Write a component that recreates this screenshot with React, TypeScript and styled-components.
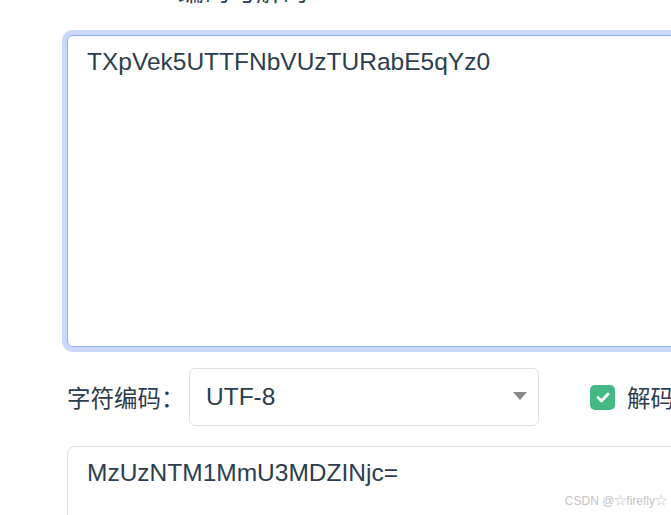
import styled, { createGlobalStyle } from "styled-components";

// 전역 스타일
const GlobalStyle = createGlobalStyle`
  html, body {
    margin: 0;
    padding: 0;
    background: #ffffff;
  }
  body {
    font-family: "Liberation Sans", Arial, "Noto Sans CJK SC", sans-serif;
    color: #2c3e50;
  }
`;

// 화면 전체 래퍼
const Page = styled.div`
  width: 671px;
  height: 515px;
  overflow: hidden;
  position: relative;
  padding-left: 62px;
  box-sizing: border-box;
`;

// 위로 잘려 나간 제목
const Title = styled.div`
  margin-top: -25px;
  padding-left: 116px;
  height: 30px;
  font-size: 26px;
  line-height: 30px;
  font-family: "Noto Sans CJK SC", sans-serif;
`;

// 입력 영역 (포커스 상태)
const InputArea = styled.textarea`
  display: block;
  box-sizing: border-box;
  margin: 30px 0 0 5px;
  width: 720px;
  height: 312px;
  padding: 11px 19px;
  border: 1px solid #8fb0f4;
  border-radius: 6px;
  box-shadow: 0 0 0 5px #cad8fc;
  outline: none;
  resize: none;
  font-family: "Liberation Sans", Arial, sans-serif;
  font-size: 24.5px;
  line-height: 30px;
  color: #2c3e50;
`;

// 옵션 줄
const OptionRow = styled.div`
  display: flex;
  align-items: center;
  margin: 21px 0 0 5px;
  height: 58px;
`;

const Label = styled.span`
  font-family: "Noto Sans CJK SC", sans-serif;
  font-size: 23.5px;
  width: 122px;
  flex: none;
`;

const SelectBox = styled.div`
  position: relative;
  box-sizing: border-box;
  width: 350px;
  height: 58px;
  border: 1px solid #dcdfe6;
  border-radius: 6px;
  display: flex;
  align-items: center;
  padding-left: 16px;
  font-size: 24.5px;
  flex: none;
`;

const Caret = styled.span`
  position: absolute;
  right: 11px;
  top: 23px;
  width: 0;
  height: 0;
  border-left: 7px solid transparent;
  border-right: 7px solid transparent;
  border-top: 8px solid #8a8a8a;
`;

const CheckWrap = styled.label`
  display: flex;
  align-items: center;
  margin-left: 51px;
  gap: 12px;
  flex: none;
`;

const CheckBox = styled.span`
  width: 25px;
  height: 25px;
  border-radius: 5px;
  background: #42b983;
  display: flex;
  align-items: center;
  justify-content: center;
`;

const CheckText = styled.span`
  font-family: "Noto Sans CJK SC", sans-serif;
  font-size: 23.5px;
  white-space: nowrap;
`;

// 결과 영역
const OutputArea = styled.div`
  box-sizing: border-box;
  margin: 20px 0 0 5px;
  width: 720px;
  height: 200px;
  border: 1px solid #dcdfe6;
  border-radius: 8px;
  padding: 11px 19px;
  font-size: 24.5px;
  line-height: 30px;
`;

// 워터마크
const Watermark = styled.span`
  position: absolute;
  right: 4px;
  bottom: 7px;
  font-size: 12px;
  color: #c4c4c4;
  font-family: "Liberation Sans", Arial, "Noto Sans CJK SC", sans-serif;
`;

export default function App() {
  return (
    <>
      <GlobalStyle />
      <Page>
        <Title>编码与解码</Title>
        <InputArea defaultValue="TXpVek5UTTFNbVUzTURabE5qYz0" spellCheck={false} />
        <OptionRow>
          <Label>字符编码：</Label>
          <SelectBox>
            UTF-8
            <Caret />
          </SelectBox>
          <CheckWrap>
            <CheckBox>
              <svg width="14" height="11" viewBox="0 0 14 11">
                <path d="M2 5.5 L5.5 9 L12 2" stroke="#fff" strokeWidth="2.8" fill="none" strokeLinecap="round" strokeLinejoin="round" />
              </svg>
            </CheckBox>
            <CheckText>解码</CheckText>
          </CheckWrap>
        </OptionRow>
        <OutputArea>MzUzNTM1MmU3MDZINjc=</OutputArea>
        <Watermark>CSDN @☆firefly☆</Watermark>
      </Page>
    </>
  );
}
